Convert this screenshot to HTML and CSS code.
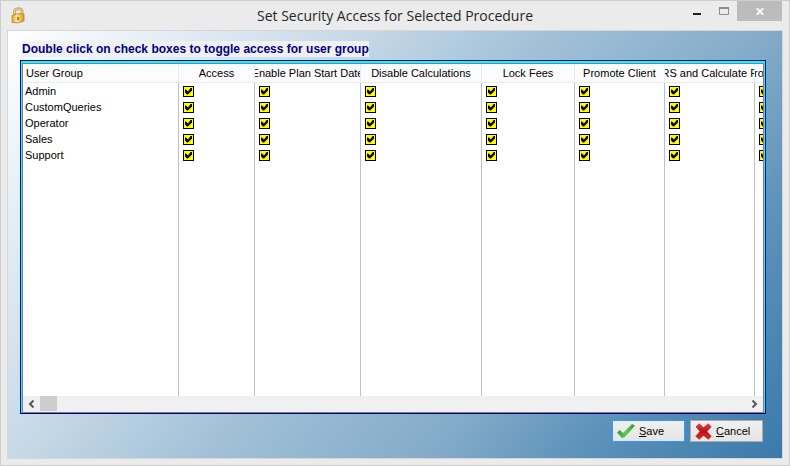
FILE: index.html
```html
<!DOCTYPE html>
<html lang="en">
<head>
<meta charset="utf-8">
<title>Set Security Access for Selected Procedure</title>
<link rel="stylesheet" href="styles.css">
</head>
<body>
<div class="window">
  <header class="titlebar">
    <svg class="lock" viewBox="0 0 16 17" aria-hidden="true">
      <defs><linearGradient id="gold" x1="0" x2="1"><stop offset="0" stop-color="#e2a33c"/><stop offset=".4" stop-color="#ffe48e"/><stop offset="1" stop-color="#d9952f"/></linearGradient></defs>
      <path d="M4.5 9V5.5Q4.5 1.8 8.500 1.8T12 5.5V8" fill="none" stroke="#b48a45" stroke-width="2.6"/>
      <path d="M4.5 9V5.5Q4.5 1.8 8.500 1.8T12 5.5V8" fill="none" stroke="#f5d890" stroke-width="1.2"/>
      <path d="M2 8.500Q8 5.500 14 7L14 14Q8 17 2 15.500Z" fill="url(#gold)" stroke="#bd8228" stroke-width=".8"/>
      <path d="M8 10v3" stroke="#8a5a18" stroke-width="1.4"/>
    </svg>
    <h1 class="title">Set Security Access for Selected Procedure</h1>
    <div class="controls">
      <button class="control" type="button" aria-label="Minimize"><svg width="10" height="10"><path d="M1 7h8v2H1z" fill="#1e1e1e"/></svg></button>
      <button class="control" type="button" aria-label="Maximize"><svg width="10" height="8"><path d="M.5 1v6.500h9V1" fill="none" stroke="#8c8c8c"/><path d="M0 0h10v2H0z" fill="#8c8c8c"/></svg></button>
      <button class="control close" type="button" aria-label="Close"><svg width="8" height="7"><path d="M.8.3 7.200 6.700M7.200.3.8 6.700" stroke="#fff" stroke-width="1.8"/></svg></button>
    </div>
  </header>
  <main class="client">
    <p class="hint">Double click on check boxes to toggle access for user group</p>
    <div class="grid">
      <div class="grid-view">
        <table class="access">
          <colgroup><col class="c-group"><col class="c-access"><col class="c-plan"><col class="c-disable"><col class="c-lock"><col class="c-promote"><col class="c-calc"><col></colgroup>
          <thead>
            <tr><th class="left"><span>User Group</span></th><th><span>Access</span></th><th><span>Enable Plan Start Date</span></th><th><span>Disable Calculations</span></th><th><span>Lock Fees</span></th><th><span>Promote Client</span></th><th><span>RS and Calculate P</span></th><th><span>ro</span></th></tr>
          </thead>
          <tbody>
            <tr><td>Admin</td><td><input type="checkbox" aria-label="Admin: Access" checked></td><td><input type="checkbox" aria-label="Admin: Enable Plan Start Date" checked></td><td><input type="checkbox" aria-label="Admin: Disable Calculations" checked></td><td><input type="checkbox" aria-label="Admin: Lock Fees" checked></td><td><input type="checkbox" aria-label="Admin: Promote Client" checked></td><td><input type="checkbox" aria-label="Admin: Calculate" checked></td><td><input type="checkbox" aria-label="Admin: Other" checked></td></tr>
            <tr><td>CustomQueries</td><td><input type="checkbox" aria-label="CustomQueries: Access" checked></td><td><input type="checkbox" aria-label="CustomQueries: Enable Plan Start Date" checked></td><td><input type="checkbox" aria-label="CustomQueries: Disable Calculations" checked></td><td><input type="checkbox" aria-label="CustomQueries: Lock Fees" checked></td><td><input type="checkbox" aria-label="CustomQueries: Promote Client" checked></td><td><input type="checkbox" aria-label="CustomQueries: Calculate" checked></td><td><input type="checkbox" aria-label="CustomQueries: Other" checked></td></tr>
            <tr><td>Operator</td><td><input type="checkbox" aria-label="Operator: Access" checked></td><td><input type="checkbox" aria-label="Operator: Enable Plan Start Date" checked></td><td><input type="checkbox" aria-label="Operator: Disable Calculations" checked></td><td><input type="checkbox" aria-label="Operator: Lock Fees" checked></td><td><input type="checkbox" aria-label="Operator: Promote Client" checked></td><td><input type="checkbox" aria-label="Operator: Calculate" checked></td><td><input type="checkbox" aria-label="Operator: Other" checked></td></tr>
            <tr><td>Sales</td><td><input type="checkbox" aria-label="Sales: Access" checked></td><td><input type="checkbox" aria-label="Sales: Enable Plan Start Date" checked></td><td><input type="checkbox" aria-label="Sales: Disable Calculations" checked></td><td><input type="checkbox" aria-label="Sales: Lock Fees" checked></td><td><input type="checkbox" aria-label="Sales: Promote Client" checked></td><td><input type="checkbox" aria-label="Sales: Calculate" checked></td><td><input type="checkbox" aria-label="Sales: Other" checked></td></tr>
            <tr><td>Support</td><td><input type="checkbox" aria-label="Support: Access" checked></td><td><input type="checkbox" aria-label="Support: Enable Plan Start Date" checked></td><td><input type="checkbox" aria-label="Support: Disable Calculations" checked></td><td><input type="checkbox" aria-label="Support: Lock Fees" checked></td><td><input type="checkbox" aria-label="Support: Promote Client" checked></td><td><input type="checkbox" aria-label="Support: Calculate" checked></td><td><input type="checkbox" aria-label="Support: Other" checked></td></tr>
            <tr class="filler"><td></td><td></td><td></td><td></td><td></td><td></td><td></td><td></td></tr>
          </tbody>
        </table>
      </div>
      <div class="scrollbar">
        <button class="arrow" type="button" aria-label="Scroll left"><svg width="7" height="8"><path d="M5.500.5 2 4l3.500 3.500" fill="none" stroke="#555" stroke-width="2"/></svg></button>
        <div class="thumb"></div>
        <button class="arrow right" type="button" aria-label="Scroll right"><svg width="7" height="8"><path d="M1.500.5 5 4 1.500 7.500" fill="none" stroke="#555" stroke-width="2"/></svg></button>
      </div>
    </div>
    <div class="actions">
      <button class="action primary" type="button"><svg width="18" height="16" viewBox="0 0 18 16"><defs><linearGradient id="green" x1="0" x2="1"><stop offset="0" stop-color="#27a02c"/><stop offset=".5" stop-color="#5cce52"/><stop offset="1" stop-color="#2b9634"/></linearGradient></defs><path d="M0 9.500 3 7 6 10 15 1 18 2.500 8 14 5 15Z" fill="url(#green)"/></svg><span><u>S</u>ave</span></button>
      <button class="action" type="button"><svg width="17" height="17" viewBox="0 0 16 16"><defs><linearGradient id="red" x1="0" y1="0" x2="0" y2="1"><stop offset="0" stop-color="#e04545"/><stop offset=".5" stop-color="#b81414"/><stop offset="1" stop-color="#e02c2c"/></linearGradient></defs><path d="M.5 3.500 4 .3 8 4 12.500.3 15.700 3.500 11.500 8l4.200 4.500-3.200 3.200L8 12 4 15.700.3 12.500 4.500 8Z" fill="url(#red)"/></svg><span><u>C</u>ancel</span></button>
    </div>
  </main>
</div>
</body>
</html>
```
FILE: styles.css
```css
* { box-sizing: border-box; }
body { margin: 0; font: 11px/16px "Liberation Sans", Arial, sans-serif; color: #000; }
button { font: inherit; color: inherit; padding: 0; border: 0; background: none; }
svg { display: block; flex: none; }

.window {
  display: flex;
  flex-direction: column;
  min-height: 100vh;
  padding: 0 7px 7px;
  border: 1px solid #cdcdcd;
  background: #ebebeb;
}
.titlebar { display: grid; grid-template-columns: 1fr auto 1fr; height: 30px; }
.lock { width: 16px; height: 17px; margin: 6px 0 0 2px; }
.title { margin: 0; font: 14px/29px "Open Sans", "Noto Sans", sans-serif; color: #262626; white-space: nowrap; }
.controls { display: flex; justify-content: flex-end; }
.control { display: flex; align-items: center; justify-content: center; width: 27px; height: 20px; }
.control.close { width: 45px; background: #bcbcbc; }

.client {
  display: flex;
  flex: 1;
  flex-direction: column;
  padding: 10px 16px 16px 12px;
  outline: 1px solid #d6d6d6;
  background: linear-gradient(129deg, #fff 0%, #e6eff6 13%, #c5d8e6 32%, #a2c1d8 48%, #82aac8 69%, #5c91ba 82%, #3a7aab 100%);
}
.hint {
  align-self: flex-start;
  margin: 0 0 3px 2px;
  background: #f0f0f0;
  color: #000080;
  font-weight: bold;
  font-size: 12px;
}
.grid {
  display: flex;
  flex: 1;
  flex-direction: column;
  border: 1px solid #000080;
  box-shadow: inset 1px 2px #00ffff, inset -1px 0 #00ffff;
  padding: 2px 1px 0;
}
.grid-view { display: flex; flex: 1; border: 1px solid #808080; border-bottom: 0; background: #fff; }
.access { width: 100%; border-collapse: separate; border-spacing: 0; table-layout: fixed; }
.c-group { width: 156px; }
.c-access { width: 76px; }
.c-plan { width: 106px; }
.c-disable { width: 121px; }
.c-lock { width: 93px; }
.c-promote, .c-calc { width: 90px; }
.access th {
  height: 19px;
  padding: 0;
  border-right: 1px solid #e2ecfa;
  border-bottom: 1px solid #e2ecfa;
  background: #fcfcfc;
  font-weight: normal;
}
.access th span { display: flex; justify-content: center; overflow: hidden; white-space: nowrap; }
.access th.left span { justify-content: flex-start; padding-left: 3px; }
.access td { height: 16px; padding: 0 2px; border-right: 1px solid #c0c0c0; overflow: hidden; white-space: nowrap; }
.access tr > :last-child { border-right: 0; }
.access .filler td { height: auto; }
.access td:not(:first-child) { padding: 0 0 0 4px; }
.access input {
  display: block;
  appearance: none;
  width: 11px;
  height: 11px;
  margin: 0;
  border: 1px solid #000;
  background: #ff0;
}
.access input:checked::before {
  content: "";
  display: block;
  width: 7px;
  height: 7px;
  margin: 1px;
  background: #000;
  clip-path: polygon(0 2px, 1px 2px, 3px 4px, 6px 0, 7px 0, 7px 3px, 3px 7px, 2px 7px, 0 5px);
}
.scrollbar { display: flex; height: 17px; border: 1px solid #808080; border-top: 0; background: #f0f0f0; }
.arrow { display: flex; align-items: center; justify-content: center; width: 17px; }
.arrow.right { margin-left: auto; }
.thumb { width: 17px; height: 15px; background: #cdcdcd; }

.actions { display: flex; justify-content: flex-end; gap: 5px; padding: 6px 3px 0 0; }
.action {
  display: flex;
  align-items: center;
  gap: 4px;
  width: 73px;
  height: 22px;
  padding: 0 4px;
  border: 1px solid #acacac;
  background: linear-gradient(#f0f0f0, #e5e5e5);
}
.action.primary { border-color: #3399ff; }
```
